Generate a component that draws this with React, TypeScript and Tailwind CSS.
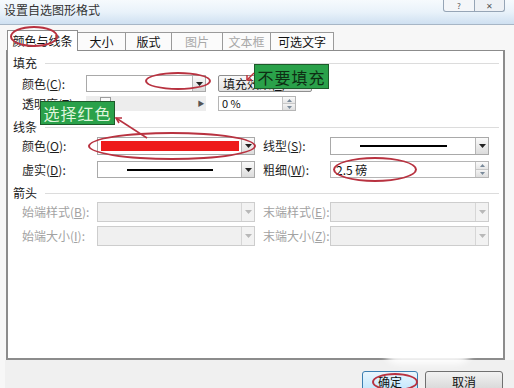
import type { ReactNode } from 'react';

const Arrow = ({ disabled = false }: { disabled?: boolean }) => (
  <div
    className={`w-[13px] h-full flex items-center justify-center border-l ${
      disabled ? 'border-[#d6d6d6] bg-[#f2f2f2]' : 'border-[#b5b5b5] bg-gradient-to-b from-[#fafafa] to-[#dcdcdc]'
    }`}
  >
    <svg width="7" height="4" viewBox="0 0 7 4">
      <path d="M0 0 L7 0 L3.5 4 Z" fill={disabled ? '#b8b8b8' : '#222'} />
    </svg>
  </div>
);

const Spin = () => (
  <div className="w-[13px] h-full flex flex-col border-l border-[#c4c4c4]">
    <div className="flex-1 flex items-center justify-center bg-gradient-to-b from-[#fbfbfb] to-[#e6e6e6] border-b border-[#c8c8c8]">
      <svg width="5" height="3" viewBox="0 0 5 3">
        <path d="M0 3 L5 3 L2.5 0 Z" fill="#7a8a9a" />
      </svg>
    </div>
    <div className="flex-1 flex items-center justify-center bg-gradient-to-b from-[#f3f3f3] to-[#dedede]">
      <svg width="5" height="3" viewBox="0 0 5 3">
        <path d="M0 0 L5 0 L2.5 3 Z" fill="#7a8a9a" />
      </svg>
    </div>
  </div>
);

const Header = ({ text, className }: { text: string; className: string }) => (
  <div className={`flex items-center h-[14px] pr-[4px] ${className}`}>
    <span className="text-[12px] leading-none text-[#1a1a1a]">{text}</span>
    <div className="flex-1 h-px bg-[#dcdcdc] ml-[8px]" />
  </div>
);

const Label = ({ children, disabled = false, w }: { children: ReactNode; disabled?: boolean; w: string }) => (
  <span className={`${w} shrink-0 text-[12px] leading-none ${disabled ? 'text-[#a2a2a2]' : 'text-[#1e1e1e]'}`}>
    {children}
  </span>
);

const Select = ({ children, disabled = false, w }: { children?: ReactNode; disabled?: boolean; w: string }) => (
  <div
    className={`${w} h-full flex border ${
      disabled ? 'border-[#cdcdcd] bg-[#f0f0f0]' : 'border-[#a9a9a9] bg-white'
    }`}
  >
    <div className="flex-1 flex items-center justify-center">{children}</div>
    <Arrow disabled={disabled} />
  </div>
);

const tabs = [
  { name: '大小', w: 'w-[48px]', off: false },
  { name: '版式', w: 'w-[46px]', off: false },
  { name: '图片', w: 'w-[51px]', off: true },
  { name: '文本框', w: 'w-[48px]', off: true },
  { name: '可选文字', w: 'w-[63px]', off: false },
];

export default function App() {
  return (
    <div className="relative w-[514px] h-[388px] overflow-hidden bg-white flex flex-col font-['Noto_Sans_CJK_SC','Liberation_Sans',sans-serif]">
      {/* Title bar */}
      <div className="h-[25px] shrink-0 flex items-start border-b border-[#a7b6c6] bg-gradient-to-b from-[#f6fafd] via-[#e9f2fa] to-[#cfe0f1]">
        <span className="pl-[4px] pt-[4px] text-[12px] leading-none text-[#333]">设置自选图形格式</span>
        <div className="ml-auto mr-[9px] flex">
          <div className="w-[32px] h-[12px] border border-t-0 border-[#96a5b6] rounded-bl-[3px] bg-[#f4f6f9] flex items-center justify-center text-[8px] leading-none text-[#555]">
            ?
          </div>
          <div className="w-[30px] h-[12px] border border-t-0 border-l-0 border-[#96a5b6] rounded-br-[3px] bg-[#eef1f5] flex items-center justify-center text-[8px] leading-none text-[#555]">
            ✕
          </div>
        </div>
      </div>

      {/* Dialog body */}
      <div className="flex-1 flex flex-col pl-[5px] bg-[#f7f7f7]">
        {/* Tabs */}
        <div className="h-[25px] flex items-end pl-[2px]">
          <div className="relative z-10 -mb-px w-[71px] h-[21px] bg-white border border-b-0 border-[#8e8e8e] flex items-center justify-center text-[12px] leading-none text-[#111]">
            颜色与线条
          </div>
          {tabs.map((t) => (
            <div
              key={t.name}
              className={`${t.w} h-[18px] bg-[#fbfbfb] border border-l-0 border-b-0 border-[#9a9a9a] flex items-center justify-center text-[12px] leading-none ${
                t.off ? 'text-[#a8a8a8]' : 'text-[#111]'
              }`}
            >
              {t.name}
            </div>
          ))}
        </div>

        {/* Panel */}
        <div className="ml-px w-[499px] h-[310px] bg-white border-t border-l-2 border-r-2 border-b-2 border-[#8c8c8c] pl-[5px] flex flex-col">
          <Header text="填充" className="mt-[5px]" />

          <div className="mt-[5px] h-[17px] flex items-center">
            <Label w="w-[73px] pl-[9px]">
              颜色(<u>C</u>):
            </Label>
            <Select w="w-[120px]" />
            <div className="ml-[12px] w-[94px] h-full border border-[#8f8f8f] rounded-[2px] bg-gradient-to-b from-[#fafafa] to-[#e2e2e2] flex items-center pl-[4px] text-[12px] leading-none text-[#111]">
              填充效果(<u>F</u>)...
            </div>
          </div>

          <div className="mt-[4px] h-[15px] flex items-center">
            <Label w="w-[73px] pl-[9px]">
              透明度(<u>T</u>):
            </Label>
            <div className="w-[120px] h-full flex items-center bg-[#ededed]">
              <span className="w-[14px] text-center text-[7px] text-[#555]">◀</span>
              <div className="w-[11px] h-[14px] border border-[#9c9c9c] bg-[#fafafa]" />
              <div className="flex-1" />
              <span className="w-[10px] text-center text-[7px] text-[#555]">▶</span>
            </div>
            <div className="ml-[12px] w-[78px] h-full border border-[#b5b5b5] flex">
              <span className="flex-1 pl-[3px] flex items-center text-[11px] leading-none text-[#111]">0 %</span>
              <Spin />
            </div>
          </div>

          <Header text="线条" className="mt-[9px]" />

          <div className="mt-[3px] h-[18px] flex items-center">
            <Label w="w-[84px] pl-[9px]">
              颜色(<u>O</u>):
            </Label>
            <Select w="w-[158px]">
              <div className="w-full h-full p-[3px] pr-[2px]">
                <div className="w-full h-full bg-[#ee1b1b]" />
              </div>
            </Select>
            <Label w="w-[75px] pl-[8px]">
              线型(<u>S</u>):
            </Label>
            <Select w="w-[159px]">
              <div className="w-[87px] h-[2px] bg-black" />
            </Select>
          </div>

          <div className="mt-[6px] h-[17px] flex items-center">
            <Label w="w-[84px] pl-[9px]">
              虚实(<u>D</u>):
            </Label>
            <Select w="w-[158px]">
              <div className="w-[86px] h-[2px] bg-black" />
            </Select>
            <Label w="w-[75px] pl-[8px]">
              粗细(<u>W</u>):
            </Label>
            <div className="w-[159px] h-full border border-[#b5b5b5] flex">
              <span className="flex-1 pl-[5px] flex items-center text-[12px] leading-none text-[#111]">2.5 磅</span>
              <Spin />
            </div>
          </div>

          <Header text="箭头" className="mt-[8px]" />

          <div className="mt-[2px] h-[20px] flex items-center">
            <Label w="w-[84px] pl-[9px]" disabled>
              始端样式(<u>B</u>):
            </Label>
            <Select w="w-[158px]" disabled />
            <Label w="w-[75px] pl-[8px]" disabled>
              末端样式(<u>E</u>):
            </Label>
            <Select w="w-[159px]" disabled />
          </div>

          <div className="mt-[4px] h-[20px] flex items-center">
            <Label w="w-[84px] pl-[9px]" disabled>
              始端大小(<u>I</u>):
            </Label>
            <Select w="w-[158px]" disabled />
            <Label w="w-[75px] pl-[8px]" disabled>
              末端大小(<u>Z</u>):
            </Label>
            <Select w="w-[159px]" disabled />
          </div>
        </div>

        {/* Buttons */}
        <div className="flex-1 bg-[#f0f0f0] flex items-start justify-end gap-[7px] pt-[11px] pr-[11px]">
          <div className="w-[56px] h-[22px] border border-[#3c7fb1] rounded-[3px] bg-gradient-to-b from-[#eaf6fd] to-[#bee6fd] flex items-center justify-center text-[12px] leading-none text-[#111]">
            确定
          </div>
          <div className="w-[78px] h-[22px] border border-[#707070] rounded-[3px] bg-gradient-to-b from-[#f2f2f2] to-[#d5d5d5] flex items-center justify-center text-[12px] leading-none text-[#111]">
            取消
          </div>
        </div>
      </div>

      {/* Watermark blur */}
      <div className="absolute left-[383px] top-[332px] w-[90px] h-[32px] rounded-full bg-white/90 blur-[3px]" />

      {/* Annotations */}
      <div className="absolute z-20 left-[254px] top-[64px] w-[75px] h-[25px] bg-[#2aa14a] border border-[#1d5a2a] flex items-center justify-center text-[16px] leading-none tracking-[1px] text-[#0e2e14]">
        不要填充
      </div>
      <div className="absolute z-20 left-[40px] top-[101px] w-[75px] h-[24px] bg-[#2aa14a] border border-[#1d5a2a] flex items-center justify-center text-[16px] leading-none tracking-[1px] text-[#dff5dc]">
        选择红色
      </div>

      <div className="absolute z-20 left-[10px] top-[26px] w-[48px] h-[21px] rounded-[50%] border-2 border-[#b83240]" />
      <div className="absolute z-20 left-[145px] top-[72px] w-[66px] h-[18px] rounded-[50%] border-2 border-[#b83240]" />
      <div className="absolute z-20 left-[88px] top-[132px] w-[168px] h-[28px] rounded-[50%] border-2 border-[#b83240]" />
      <div className="absolute z-20 left-[333px] top-[157px] w-[84px] h-[25px] rounded-[50%] border-2 border-[#b83240]" />
      <div className="absolute z-20 left-[372px] top-[373px] w-[46px] h-[18px] rounded-[50%] border-2 border-[#b83240]" />

      <svg className="absolute z-20 inset-0 pointer-events-none" width="514" height="388" viewBox="0 0 514 388">
        <path d="M147 138 L116 118" stroke="#b83240" strokeWidth="1.5" fill="none" />
        <path d="M122 118 L116 118 L119 123" stroke="#b83240" strokeWidth="1.5" fill="none" />
        <path d="M254 73 L247 80" stroke="#c0303a" strokeWidth="1.5" fill="none" />
        <path d="M247 75 L247 80 L252 80" stroke="#c0303a" strokeWidth="1.5" fill="none" />
      </svg>
    </div>
  );
}
